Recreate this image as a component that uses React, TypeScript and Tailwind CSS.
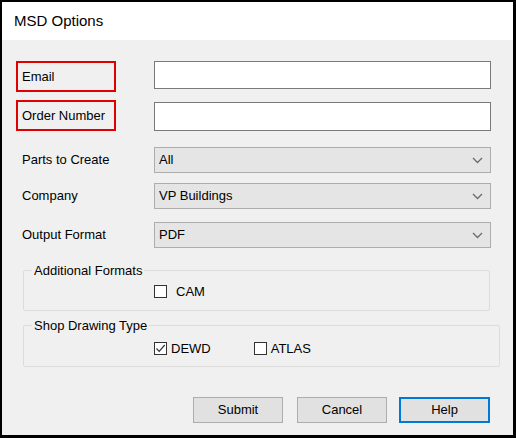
import React from "react";

const font = { fontFamily: '"Liberation Sans", Arial, sans-serif' };

function Chevron() {
    return (
        <svg width="11" height="7" viewBox="0 0 11 7" fill="none" stroke="#6b6b6b" strokeWidth="1.3">
            <polyline points="1,1 5.5,5.5 10,1" />
        </svg>
    );
}

function Select({ value }: { value: string }) {
    return (
        <div className="flex h-[26px] w-[337px] items-center justify-between border border-[#adadad] bg-[#e5e5e5] pl-[4px] pr-[7px] text-[13px] text-black">
            <span>{value}</span>
            <Chevron />
        </div>
    );
}

function Checkbox({ checked }: { checked?: boolean }) {
    return (
        <div className="flex h-[13px] w-[13px] items-center justify-center border border-[#333] bg-white">
            {checked && (
                <svg width="11" height="11" viewBox="0 0 11 11" fill="none" stroke="#333" strokeWidth="1.2">
                    <polyline points="1.5,5.5 4.2,8.3 9.7,2" />
                </svg>
            )}
        </div>
    );
}

export default function App() {
    return (
        <div className="h-[438px] w-[516px] overflow-hidden bg-black p-[2px] pb-[3px] pr-[3px]" style={font}>
            <div className="flex h-full flex-col bg-[#f0f0f0]">
                {/* Title bar */}
                <div className="flex h-[38px] items-center bg-white pl-[12px] text-[15px] text-black">
                    MSD Options
                </div>

                <div className="flex flex-col pl-[14px]">
                    {/* Email */}
                    <div className="mt-[21px] flex items-start">
                        <div className="flex h-[31px] w-[100px] items-center border-2 border-[#e00000] pl-[4px] text-[13px]">Email</div>
                        <div className="ml-[38px] h-[28px] w-[337px] border border-[#7a7a7a] bg-white" />
                    </div>

                    {/* Order Number */}
                    <div className="mt-[8px] flex items-start">
                        <div className="flex h-[31px] w-[100px] items-center border-2 border-[#e00000] pl-[4px] text-[13px]">Order Number</div>
                        <div className="ml-[38px] mt-[2px] h-[29px] w-[337px] border border-[#7a7a7a] bg-white" />
                    </div>

                    {/* Selects */}
                    <div className="mt-[16px] flex items-center">
                        <div className="w-[138px] pl-[6px] text-[13px]">Parts to Create</div>
                        <Select value="All" />
                    </div>
                    <div className="mt-[10px] flex items-center">
                        <div className="w-[138px] pl-[6px] text-[13px]">Company</div>
                        <Select value="VP Buildings" />
                    </div>
                    <div className="mt-[13px] flex items-center">
                        <div className="w-[138px] pl-[6px] text-[13px]">Output Format</div>
                        <Select value="PDF" />
                    </div>

                    {/* Additional Formats */}
                    <div className="relative ml-[7px] mt-[22px] h-[41px] w-[467px] rounded-[2px] border border-[#dcdcdc]">
                        <span className="absolute -top-[8px] left-[8px] bg-[#f0f0f0] px-[2px] text-[13px] leading-[15px]">Additional Formats</span>
                        <div className="ml-[130px] mt-[11px] flex items-center gap-[9px] text-[13px]">
                            <Checkbox />
                            <span>CAM</span>
                        </div>
                    </div>

                    {/* Shop Drawing Type */}
                    <div className="relative ml-[7px] mt-[14px] h-[42px] w-[477px] rounded-[2px] border border-[#dcdcdc]">
                        <span className="absolute -top-[8px] left-[8px] bg-[#f0f0f0] px-[2px] text-[13px] leading-[15px]">Shop Drawing Type</span>
                        <div className="ml-[130px] mt-[13px] flex items-center text-[13px]">
                            <div className="flex items-center gap-[4px]">
                                <Checkbox checked />
                                <span>DEWD</span>
                            </div>
                            <div className="ml-[43px] flex items-center gap-[4px]">
                                <Checkbox />
                                <span>ATLAS</span>
                            </div>
                        </div>
                    </div>

                    {/* Buttons */}
                    <div className="mt-[30px] flex gap-[14px] pl-[177px] text-[13px]">
                        <button className="h-[26px] w-[90px] border border-[#adadad] bg-[#e1e1e1]">Submit</button>
                        <button className="h-[26px] w-[90px] border border-[#adadad] bg-[#e1e1e1]">Cancel</button>
                        <button className="-ml-[2px] h-[26px] w-[91px] border-2 border-[#0078d7] bg-[#e1e1e1]">Help</button>
                    </div>
                </div>
            </div>
        </div>
    );
}
